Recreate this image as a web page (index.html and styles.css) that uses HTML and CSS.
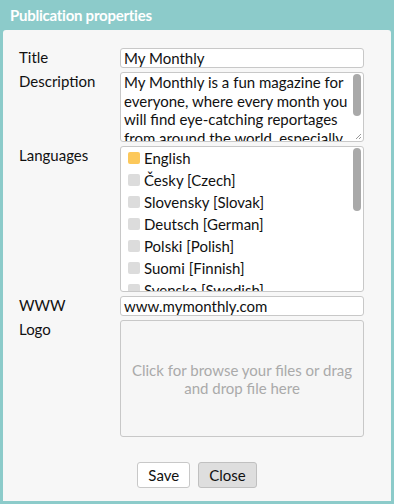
FILE: index.html
```html
<!DOCTYPE html>
<html>
<head>
<meta charset="utf-8">
<link rel="stylesheet" href="styles.css">
</head>
<body>
<div class="dialog">
  <div class="titlebar">Publication properties</div>
  <div class="panel">
    <div class="form">
      <div class="label">Title</div>
      <div class="field input">My Monthly</div>

      <div class="label">Description</div>
      <div class="field textarea">
        <div class="textarea-content">My Monthly is a fun magazine for everyone, where every month you will find eye-catching reportages from around the world, especially</div>
        <div class="thumb thumb-desc"></div>
        <svg class="grip" width="7" height="7" viewBox="0 0 7 7"><path d="M6 1L1 6M6 4L4 6" stroke="#999" stroke-width="1"/></svg>
      </div>

      <div class="label">Languages</div>
      <div class="field list">
        <div class="list-item"><span class="check on"></span>English</div>
        <div class="list-item"><span class="check"></span>Česky [Czech]</div>
        <div class="list-item"><span class="check"></span>Slovensky [Slovak]</div>
        <div class="list-item"><span class="check"></span>Deutsch [German]</div>
        <div class="list-item"><span class="check"></span>Polski [Polish]</div>
        <div class="list-item"><span class="check"></span>Suomi [Finnish]</div>
        <div class="list-item"><span class="check"></span>Svenska [Swedish]</div>
        <div class="thumb thumb-list"></div>
      </div>

      <div class="label">WWW</div>
      <div class="field input">www.mymonthly.com</div>

      <div class="label">Logo</div>
      <div class="field dropzone">Click for browse your files or drag and drop file here</div>
    </div>
    <div class="buttons">
      <button class="btn">Save</button>
      <button class="btn btn-close">Close</button>
    </div>
  </div>
</div>
</body>
</html>
```
FILE: styles.css
```css
html, body {
  margin: 0;
  padding: 0;
}
body {
  font-family: Lato, "Liberation Sans", sans-serif;
  font-size: 15px;
  color: #111;
  background: #fff;
}
.dialog {
  width: 394px;
  height: 504px;
  box-sizing: border-box;
  background: #8ccbca;
  padding: 0 3px 3px 3px;
  display: flex;
  flex-direction: column;
}
.titlebar {
  height: 30px;
  box-sizing: border-box;
  padding: 5px 0 0 7px;
  color: #fff;
  font-weight: bold;
  font-size: 15px;
  letter-spacing: -0.25px;
  line-height: 20px;
}
.panel {
  flex: 1;
  background: #f7f7f7;
  border-radius: 3px 3px 0 0;
  padding: 18px 27px 0 16px;
  display: flex;
  flex-direction: column;
}
.form {
  display: grid;
  grid-template-columns: 101px 244px;
  row-gap: 4px;
}
.label {
  line-height: 18px;
}
.field {
  background: #fff;
  border: 1px solid #c8c8c8;
  border-radius: 3px;
  box-sizing: border-box;
}
.input {
  height: 20px;
  line-height: 18px;
  padding: 0 3px;
}
.textarea {
  height: 70px;
  position: relative;
  overflow: hidden;
  padding: 0 12px 0 3px;
}
.textarea-content {
  line-height: 18.5px;
}
.thumb {
  position: absolute;
  right: 2px;
  width: 8px;
  background: #a9a9a9;
  border-radius: 4px;
}
.thumb-desc {
  top: 1px;
  height: 42px;
}
.thumb-list {
  top: 1px;
  height: 63px;
}
.grip {
  position: absolute;
  right: 1px;
  bottom: 1px;
}
.list {
  height: 146px;
  position: relative;
  overflow: hidden;
  padding: 0 0 0 7px;
}
.list-item {
  display: flex;
  align-items: center;
  height: 22px;
}
.check {
  width: 12px;
  height: 12px;
  border-radius: 2px;
  background: #dcdcdc;
  margin-right: 4px;
  flex: none;
}
.check.on {
  background: #fcc85b;
}
.dropzone {
  height: 117px;
  background: #f6f6f6;
  color: #aaa;
  display: flex;
  align-items: center;
  justify-content: center;
  text-align: center;
  padding: 0 4px;
  line-height: 18px;
}
.buttons {
  display: flex;
  justify-content: center;
  gap: 8px;
  margin: 25px -27px 0 -16px;
}
.btn {
  font-family: inherit;
  font-size: 15px;
  color: #111;
  background: #fff;
  border: 1px solid #c8c8c8;
  border-radius: 3px;
  height: 26px;
  padding: 0 10px;
}
.btn-close {
  background: #dedede;
  border-color: #c0c0c0;
}
```
